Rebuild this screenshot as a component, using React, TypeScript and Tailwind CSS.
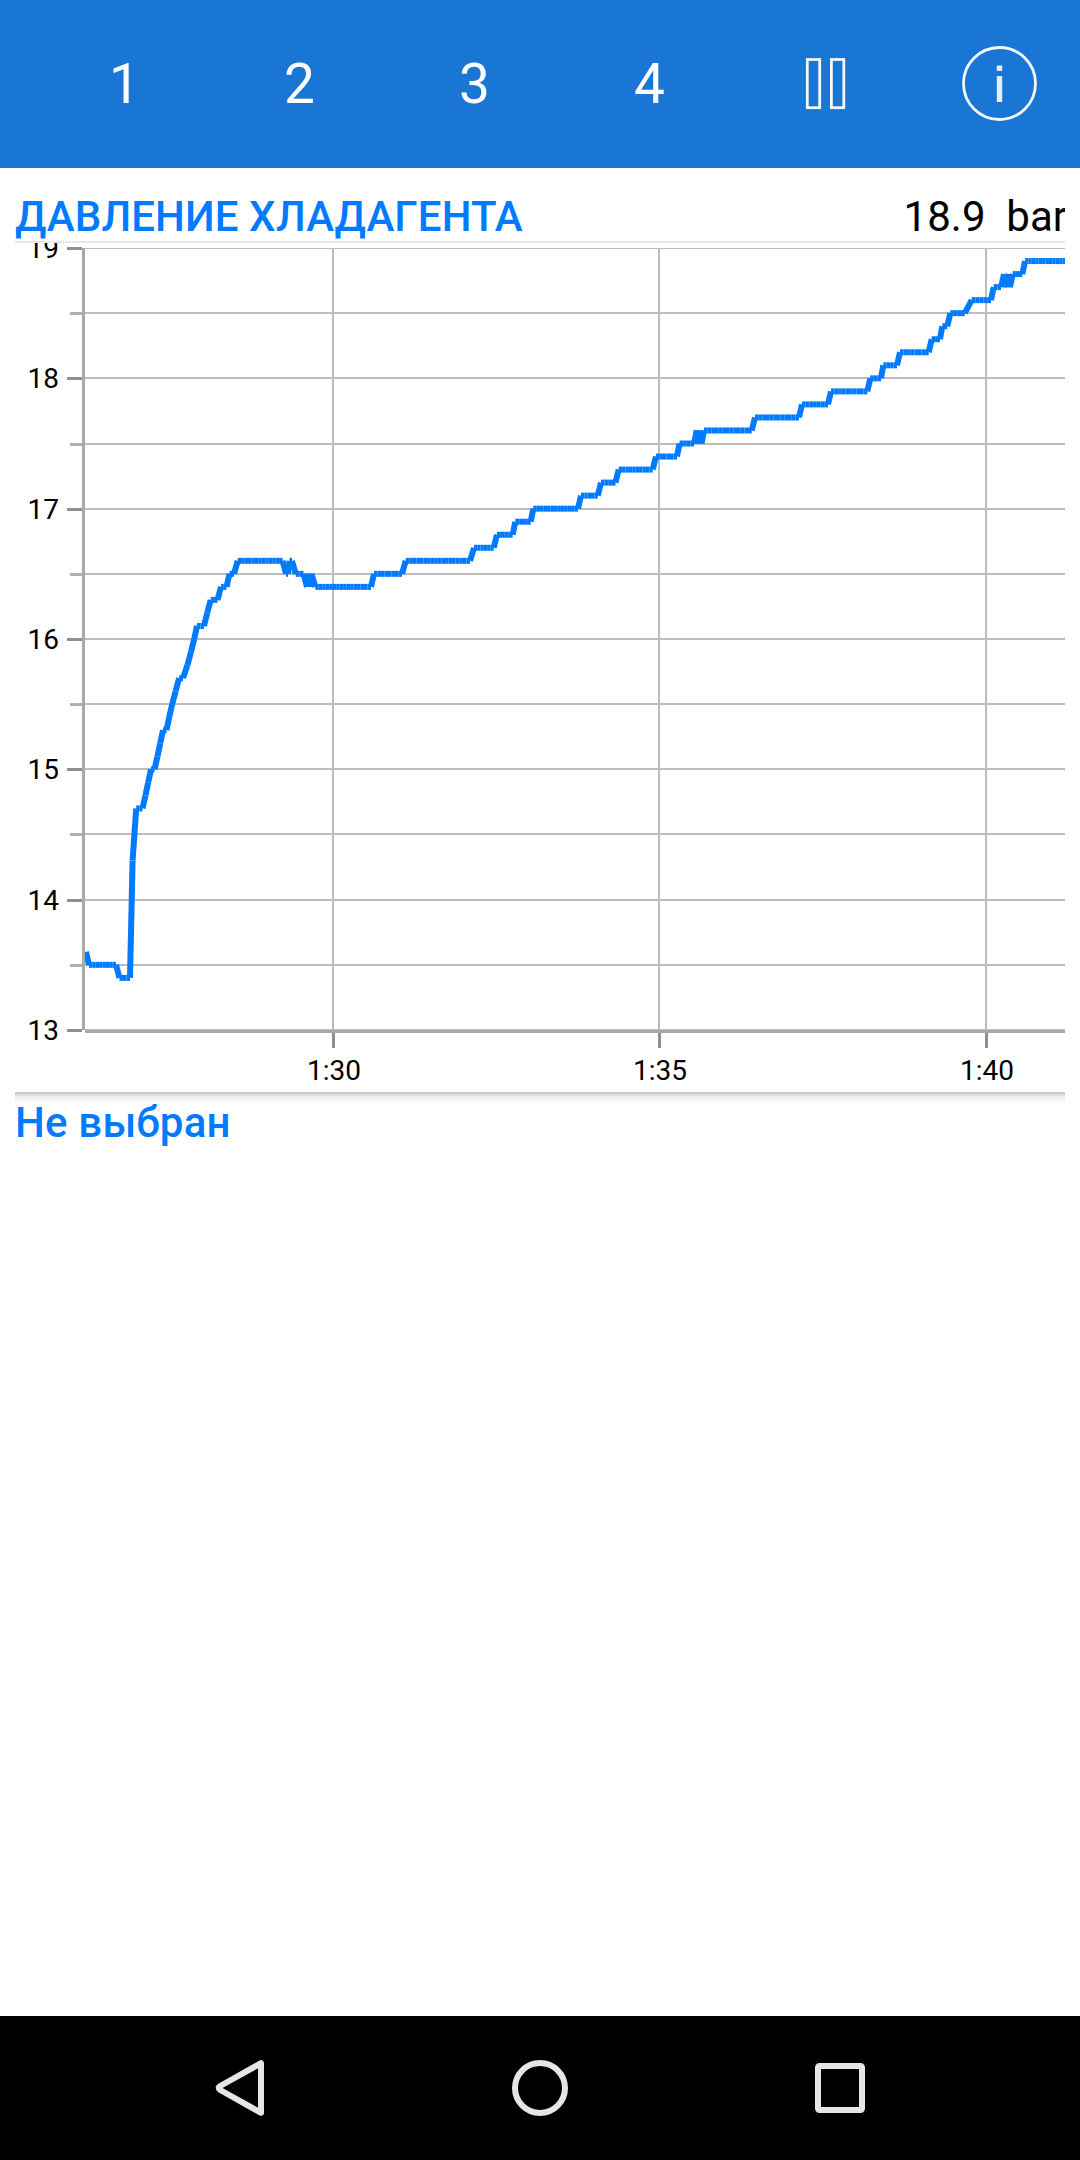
import React from "react"

// [minutes axis in px, pressure in bar], only the points where the slope changes
const readings: [number, number][] = [
    [86, 13.6], [89, 13.5], [116, 13.5], [119.5, 13.4], [130, 13.4], [132.6, 14.3], [136.2, 14.7],
    [142.5, 14.7], [145.5, 14.8], [148.2, 14.9], [151, 15], [154.5, 15], [157.5, 15.1], [160.2, 15.2], [163, 15.3],
    [166.5, 15.3], [169.2, 15.4], [172.2, 15.5], [175.6, 15.6], [179.2, 15.7], [183, 15.7], [187.5, 15.8], [191, 15.9],
    [194.2, 16], [197, 16.1], [204, 16.1], [207.2, 16.2], [210.7, 16.3], [217.5, 16.3], [221, 16.4], [226.5, 16.4],
    [229.5, 16.5], [234, 16.5], [237.7, 16.6], [282.5, 16.6], [286, 16.5], [288, 16.5], [289.5, 16.6], [292, 16.6],
    [295.7, 16.5], [303.5, 16.5], [307, 16.4], [308.5, 16.5], [309.5, 16.4], [311.5, 16.5], [315.3, 16.4], [371, 16.4],
    [374, 16.5], [402, 16.5], [405.7, 16.6], [470, 16.6], [474, 16.7], [493.7, 16.7], [497, 16.8], [512.7, 16.8],
    [515.3, 16.9], [530.7, 16.9], [533.3, 17], [578, 17], [581, 17.1], [597.7, 17.1], [601, 17.2], [615.5, 17.2],
    [618.7, 17.3], [652.7, 17.3], [656, 17.4], [677, 17.4], [679.5, 17.5], [694, 17.5], [696.7, 17.6], [698.5, 17.5],
    [700, 17.6], [701.5, 17.5], [704, 17.6], [751.7, 17.6], [755, 17.7], [799, 17.7], [802, 17.8], [828, 17.8],
    [831, 17.9], [867.3, 17.9], [870.3, 18], [881, 18], [883.3, 18.1], [897, 18.1], [900, 18.2], [928.7, 18.2],
    [931.7, 18.3], [940, 18.3], [942.3, 18.4], [947.3, 18.4], [950.3, 18.5], [964.7, 18.5], [971.7, 18.6], [991, 18.6],
    [993.7, 18.7], [1001, 18.7], [1004, 18.8], [1007.7, 18.7], [1009.5, 18.8], [1010, 18.7], [1012.7, 18.8],
    [1022.3, 18.8], [1025, 18.9], [1066, 18.9],
]

const majorTicks = [
    { label: "19", y: 247 },
    { label: "18", y: 377 },
    { label: "17", y: 508 },
    { label: "16", y: 638 },
    { label: "15", y: 768 },
    { label: "14", y: 899 },
    { label: "13", y: 1029 },
]
const minorTicks = [312, 443, 573, 703, 833, 964]
const timeTicks = [
    { label: "1:30", x: 332 },
    { label: "1:35", x: 658 },
    { label: "1:40", x: 985 },
]

const toY = (bar: number) => 1030 - (bar - 13) * 130.33

// flat parts are split into single samples, the logger draws every sample on its own
const buildSegments = () => {
    const segments: number[][] = []
    for (let i = 1; i < readings.length; i++) {
        const [x1, v1] = readings[i - 1]
        const [x2, v2] = readings[i]
        const count = v1 === v2 ? Math.max(1, Math.round((x2 - x1) / 3.55)) : 1
        const step = (x2 - x1) / count
        for (let j = 0; j < count; j++) {
            segments.push([x1 + step * j, toY(v1), x1 + step * (j + 1), toY(v2)])
        }
    }
    return segments
}

const Header = () => {
    return (
        <header className="flex h-[168px] items-center overflow-hidden bg-[#1976d4] pl-[37px] text-white">
            {["1", "2", "3", "4"].map((item) => (
                <button key={item} type="button" className="w-[175px] shrink-0 text-center text-[55px] leading-[64px]">{item}</button>
            ))}
            <button type="button" className="flex w-[175px] shrink-0 justify-center" aria-label="Pause">
                <svg width="43" height="54" viewBox="0 0 43 54" fill="none" stroke="white" strokeWidth="2.8" strokeOpacity="0.95">
                    <rect x="4.3" y="2.5" width="12.4" height="48.2" />
                    <rect x="28.4" y="2.5" width="12.4" height="48.2" />
                </svg>
            </button>
            <button type="button" className="flex w-[175px] shrink-0 justify-center" aria-label="Info">
                <svg width="77" height="78" viewBox="0 0 77 78" fill="none">
                    <circle cx="38.5" cy="38.5" r="36" stroke="white" strokeWidth="2.8" strokeOpacity="0.95" />
                    <rect x="35.8" y="20.5" width="5.400" height="5.400" fill="white" fillOpacity="0.88" />
                    <rect x="35.8" y="31" width="5.400" height="26" fill="white" fillOpacity="0.88" />
                </svg>
            </button>
        </header>
    )
}

const Chart = () => {
    return (
        <svg className="block" width="1050" height="849" viewBox="15 243 1050 849" fontSize="28" shapeRendering="crispEdges">
            <g fill="#bdbdbd">
                <rect x="85" y="248" width="980" height="1" />
                {majorTicks.slice(1).map((tick) => (
                    <rect key={tick.y} x="85" y={tick.y} width="980" height="2" />
                ))}
                {minorTicks.map((y) => (
                    <rect key={y} x="85" y={y} width="980" height="2" />
                ))}
                {timeTicks.map((tick) => (
                    <rect key={tick.x} x={tick.x} y="248" width="2" height="782" />
                ))}
            </g>
            <g fill="#b0b0b0">
                {minorTicks.map((y) => (
                    <rect key={y} x="70" y={y} width="12" height="3" />
                ))}
            </g>
            <g fill="#8f8f8f">
                {majorTicks.map((tick) => (
                    <rect key={tick.y} x="67" y={tick.y} width="15" height="3" />
                ))}
                {timeTicks.map((tick) => (
                    <rect key={tick.x} x={tick.x} y="1033" width="3" height="15" />
                ))}
            </g>
            <g fill="#a9a9a9">
                <rect x="82" y="248" width="3" height="782" />
                <rect x="85" y="1030" width="980" height="3" />
            </g>
            <g fill="black">
                {majorTicks.map((tick) => (
                    <text key={tick.label} x="59" y={tick.y + 11} textAnchor="end">{tick.label}</text>
                ))}
                {timeTicks.map((tick) => (
                    <text key={tick.label} x={tick.x + 2} y="1080" textAnchor="middle">{tick.label}</text>
                ))}
            </g>
            <svg x="85" y="243" width="980" height="849" viewBox="85 243 980 849">
                <g stroke="#007bff" strokeWidth="6" shapeRendering="auto">
                    {buildSegments().map(([x1, y1, x2, y2], i) => (
                        <line key={i} x1={x1} y1={y1} x2={x2} y2={y2} />
                    ))}
                </g>
            </svg>
        </svg>
    )
}

const NavigationBar = () => {
    return (
        <nav className="flex h-36 items-center justify-center gap-[236px] bg-black">
            <button type="button" aria-label="Back">
                <svg width="64" height="64" viewBox="0 0 64 64" fill="none" stroke="#e6e6e6" strokeWidth="6" strokeLinejoin="round">
                    <path d="M53 7.200V56.800L12.200 34Q9.200 32 12.200 30Z" />
                </svg>
            </button>
            <button type="button" aria-label="Home">
                <svg width="64" height="64" viewBox="0 0 64 64" fill="none" stroke="#e6e6e6" strokeWidth="6">
                    <circle cx="32" cy="32" r="25" />
                </svg>
            </button>
            <button type="button" aria-label="Recent apps">
                <svg width="64" height="64" viewBox="0 0 64 64" fill="none" stroke="#e6e6e6" strokeWidth="6">
                    <rect x="10" y="10" width="44" height="44" rx="1.5" />
                </svg>
            </button>
        </nav>
    )
}

const App = () => {
    return (
        <div className="flex h-[2160px] w-[1080px] flex-col overflow-hidden bg-white font-['Roboto',sans-serif]">
            <Header />
            <main className="flex-1 px-[15px]">
                <section>
                    <div className="flex h-[75px] items-start justify-between overflow-hidden border-b-2 border-[#e8e8e8] pt-6 text-[42px] leading-[49px] whitespace-pre">
                        <h2 className="font-medium tracking-[0.1px] text-[#007bff]">ДАВЛЕНИЕ ХЛАДАГЕНТА</h2>
                        <span className="-mr-[2px] text-black">18.9  bar</span>
                    </div>
                    <Chart />
                </section>
                <section>
                    <div className="h-3 bg-linear-to-b from-[#c2c2c2] via-[#ededed] via-40% to-white" />
                    <h2 className="-mt-[6px] text-[42px] leading-[49px] font-medium tracking-[0.2px] text-[#007bff]">Не выбран</h2>
                </section>
            </main>
            <NavigationBar />
        </div>
    )
}

export default App
